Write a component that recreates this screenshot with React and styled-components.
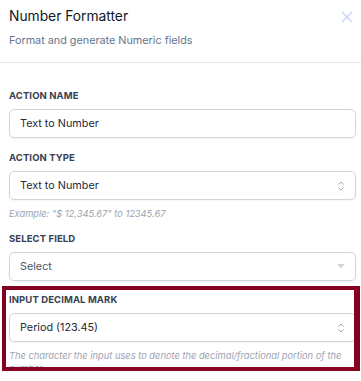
import React from "react";
import styled, { createGlobalStyle } from "styled-components";

const Global = createGlobalStyle`
  html, body {
    margin: 0;
    padding: 0;
    background: #fff;
    font-family: Inter, "Noto Sans", sans-serif;
    overflow: hidden;
  }
`;

const Panel = styled.div`
  width: 361px;
  height: 381px;
  overflow: hidden;
`;

const Header = styled.div`
  display: flex;
  justify-content: space-between;
  align-items: flex-start;
  padding: 6px 8px 0 9px;
  height: 56px;
  border-bottom: 1px solid #e5e7eb;
`;

const Title = styled.div`
  font-size: 13.8px;
  color: #111827;
  line-height: 20px;
`;

const Subtitle = styled.div`
  font-size: 10.8px;
  color: #64748b;
  margin-top: 7px;
  line-height: 16px;
`;

const Close = styled.button`
  border: 0;
  background: none;
  padding: 0;
  margin-top: 5px;
  width: 12px;
  height: 12px;
  color: #c7d2fe;
  display: flex;
`;

const Body = styled.div`
  padding: 27px 5px 0 9px;
`;

const Field = styled.div`
  margin-bottom: ${(p) => p.gap || 14}px;
`;

const Label = styled.div`
  font-size: 9.5px;
  font-weight: 700;
  color: #374151;
  letter-spacing: 0.1px;
  line-height: 12px;
  margin-bottom: 7px;
`;

const Box = styled.div`
  width: 347px;
  height: 29px;
  box-sizing: border-box;
  border: 1px solid #d1d5db;
  border-radius: 5px;
  box-shadow: 0 1px 2px rgba(0, 0, 0, 0.05);
  display: flex;
  align-items: center;
  justify-content: space-between;
  padding: 0 10px 0 10px;
  font-size: 10.8px;
  color: ${(p) => (p.muted ? "#4b5563" : "#1f2937")};
`;

const Help = styled.div`
  font-size: 9.3px;
  font-style: italic;
  color: #9ca3af;
  line-height: 13px;
  margin-top: 7px;
`;

const Highlight = styled.div`
  margin: 0 0 0 -7px;
  width: 358px;
  height: 85px;
  box-sizing: border-box;
  border: 4px solid #86001f;
  border-right-width: 6px;
  overflow: hidden;
  padding: 4px 0 0 3px;
`;

const Updown = () => (
  <svg width="8" height="12" viewBox="0 0 8 12" fill="none" stroke="#9ca3af" strokeWidth="1">
    <path d="M1.5 4.5 L4 2 L6.5 4.5" />
    <path d="M1.5 7.5 L4 10 L6.5 7.5" />
  </svg>
);

const Caret = () => (
  <svg width="8" height="5" viewBox="0 0 8 5">
    <path d="M0 0 L8 0 L4 4.5 Z" fill="#d1d5db" />
  </svg>
);

export default function App() {
  return (
    <Panel>
      <Global />
      <Header>
        <div>
          <Title>Number Formatter</Title>
          <Subtitle>Format and generate Numeric fields</Subtitle>
        </div>
        <Close aria-label="Close">
          <svg width="12" height="12" viewBox="0 0 12 12" stroke="currentColor" strokeWidth="1.4">
            <path d="M1 1 L11 11 M11 1 L1 11" />
          </svg>
        </Close>
      </Header>
      <Body>
        <Field gap={14}>
          <Label>ACTION NAME</Label>
          <Box>Text to Number</Box>
        </Field>
        <Field gap={13}>
          <Label>ACTION TYPE</Label>
          <Box>
            Text to Number
            <Updown />
          </Box>
          <Help>Example: "$ 12,345.67" to 12345.67</Help>
        </Field>
        <Field gap={5}>
          <Label>SELECT FIELD</Label>
          <Box muted>
            Select
            <Caret />
          </Box>
        </Field>
        <Highlight>
          <Label>INPUT DECIMAL MARK</Label>
          <Box>
            Period (123.45)
            <Updown />
          </Box>
          <Help>
            The character the input uses to denote the decimal/fractional portion of the number.
          </Help>
        </Highlight>
      </Body>
    </Panel>
  );
}
